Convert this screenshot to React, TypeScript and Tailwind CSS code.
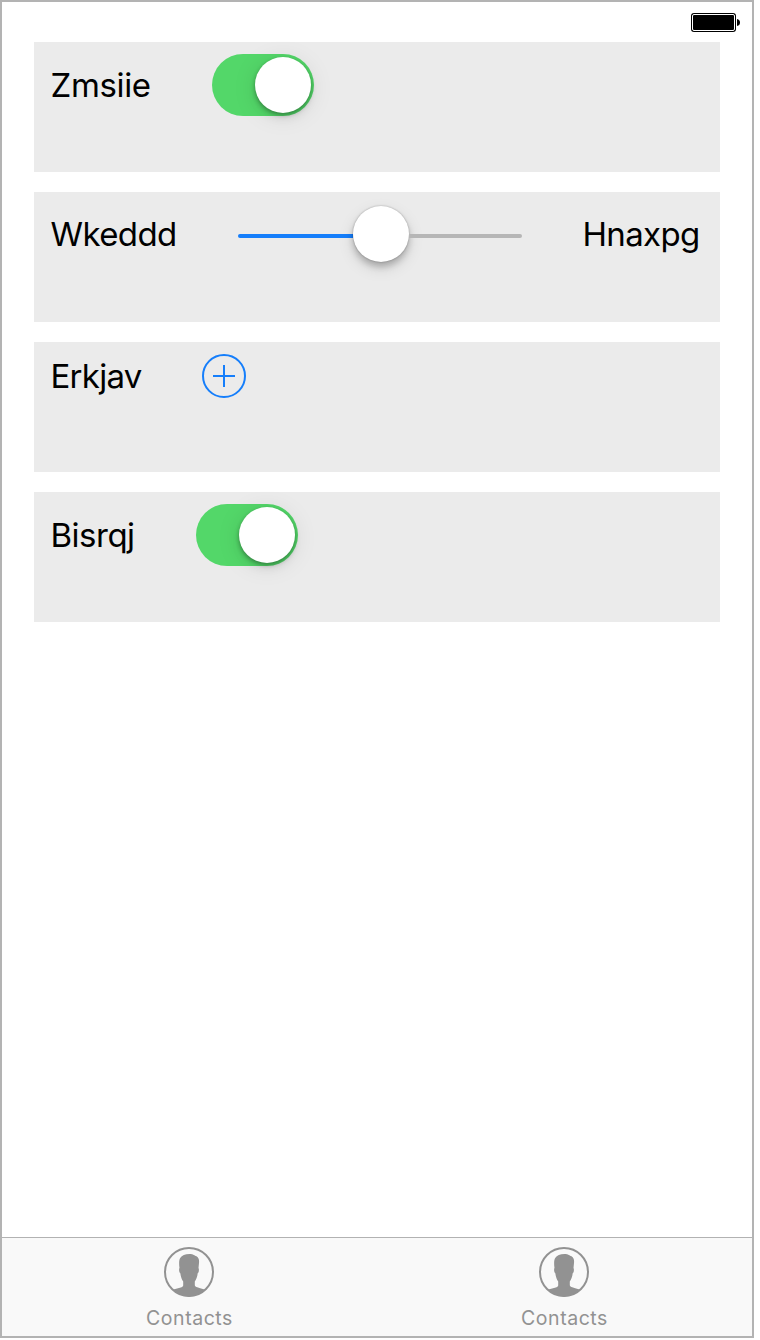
import React from "react";

function Label({ text, className }: { text: string; className: string }) {
  return (
    <span className={`block h-10 shrink-0 pl-[0.5px] text-[33px] leading-10 whitespace-nowrap text-black ${className}`}>
      {text}
    </span>
  );
}

function Card({ children }: { children: React.ReactNode }) {
  return <section className="flex h-[130px] items-start bg-[#ebebeb] pt-3 pl-4">{children}</section>;
}

function Knob({ className }: { className: string }) {
  return <span className={`block size-14 shrink-0 rounded-full bg-white ${className}`} />;
}

function Toggle() {
  return (
    <button
      role="switch"
      aria-checked="true"
      className="flex h-[62px] w-[102px] shrink-0 items-center justify-end rounded-full bg-[#53d769] pr-[3px]"
    >
      <Knob className="shadow-[0_3px_24px_rgba(0,0,0,0.1),0_6px_10px_rgba(0,0,0,0.06),0_2px_4px_rgba(0,0,0,0.32)]" />
    </button>
  );
}

function Slider() {
  return (
    <div className="mt-0.5 flex h-14 w-[284px] shrink-0 items-center">
      <span className="mt-1 h-1 w-[115px] rounded-l-full bg-[#157efb]" />
      <Knob className="shadow-[0_6px_16px_rgba(0,0,0,0.13),0_5px_6px_rgba(0,0,0,0.2),0_0_2px_rgba(0,0,0,0.3)]" />
      <span className="mt-1 h-1 w-[113px] rounded-r-full bg-[#b6b6b6]" />
    </div>
  );
}

function Battery() {
  return (
    <svg width="49" height="19" viewBox="0 0 49 19">
      <rect width="45" height="19" rx="3" fill="#000" />
      <rect x="1.5" y="1.5" width="42" height="16" rx="1.5" fill="none" stroke="#fff" />
      <path d="M46 6Q49 6.5 49 9.5T46 13Z" fill="#000" />
    </svg>
  );
}

function Tab() {
  return (
    <button className="flex flex-1 flex-col items-center pt-[9px] pr-px text-[#929292]">
      <svg width="50" height="50" viewBox="0 0 50 50">
        <circle cx="25" cy="25" r="24" fill="none" stroke="currentColor" strokeWidth="2" />
        <path
          d="M25.5 7C21 7 18 8.4 16.2 11C15.2 12.7 15 14.6 15.2 18.5L15.5 21C14.8 21.4 15 25.5 16.3 26.2C16.8 29.6 17.8 32.5 19.2 34.5V38.5C19 40.2 16.8 40.7 14 41.2L9.4 42.6C13.5 47 19 49.5 25 49.5S36.8 47 40.6 42.6L36.2 41.2C33 40.4 31 40 30.8 38.3V34.5C32.4 32.3 33.3 29.5 33.7 26.2C35.1 25.5 35.2 21.6 34.5 21L34.8 18C35.4 13.5 35.2 10.8 32.5 9.2C30.6 8.8 29.4 7 25.5 7Z"
          fill="currentColor"
        />
      </svg>
      <span className="mt-[9px] block h-6 pl-[1px] text-[19.5px] leading-6 tracking-[0.55px]">Contacts</span>
    </button>
  );
}

export default function App() {
  return (
    <div className="h-[1340px] bg-white font-['Inter',sans-serif]">
      <div className="flex h-[1338px] w-[754px] flex-col border-2 border-[#b3b3b3] bg-white">
        <header className="flex h-10 shrink-0 justify-end pt-[11px] pr-3">
          <Battery />
        </header>
        <main className="flex grow flex-col gap-5 px-8">
          <Card>
            <Label text="Zmsiie" className="mt-[11px] w-[162px] tracking-[-0.35px]" />
            <Toggle />
          </Card>
          <Card>
            <Label text="Wkeddd" className="mt-[10px] w-[188px] tracking-[-0.6px]" />
            <Slider />
            <Label text="Hnaxpg" className="mt-[10px] ml-[60px] tracking-[-0.65px]" />
          </Card>
          <Card>
            <Label text="Erkjav" className="mt-[2px] w-[152px] tracking-[-0.75px]" />
            <button aria-label="Add" className="text-[#157efb]">
              <svg width="44" height="44" viewBox="0 0 44 44" fill="none" stroke="currentColor" strokeWidth="2">
                <circle cx="22" cy="22" r="21" />
                <path d="M11 22H33M22 11V33" />
              </svg>
            </button>
          </Card>
          <Card>
            <Label text="Bisrqj" className="mt-[11px] w-[146px] tracking-[-0.5px]" />
            <Toggle />
          </Card>
        </main>
        <nav className="flex h-[99px] shrink-0 border-t border-[#b2b2b2] bg-[#f9f9f9]">
          <Tab />
          <Tab />
        </nav>
      </div>
    </div>
  );
}
